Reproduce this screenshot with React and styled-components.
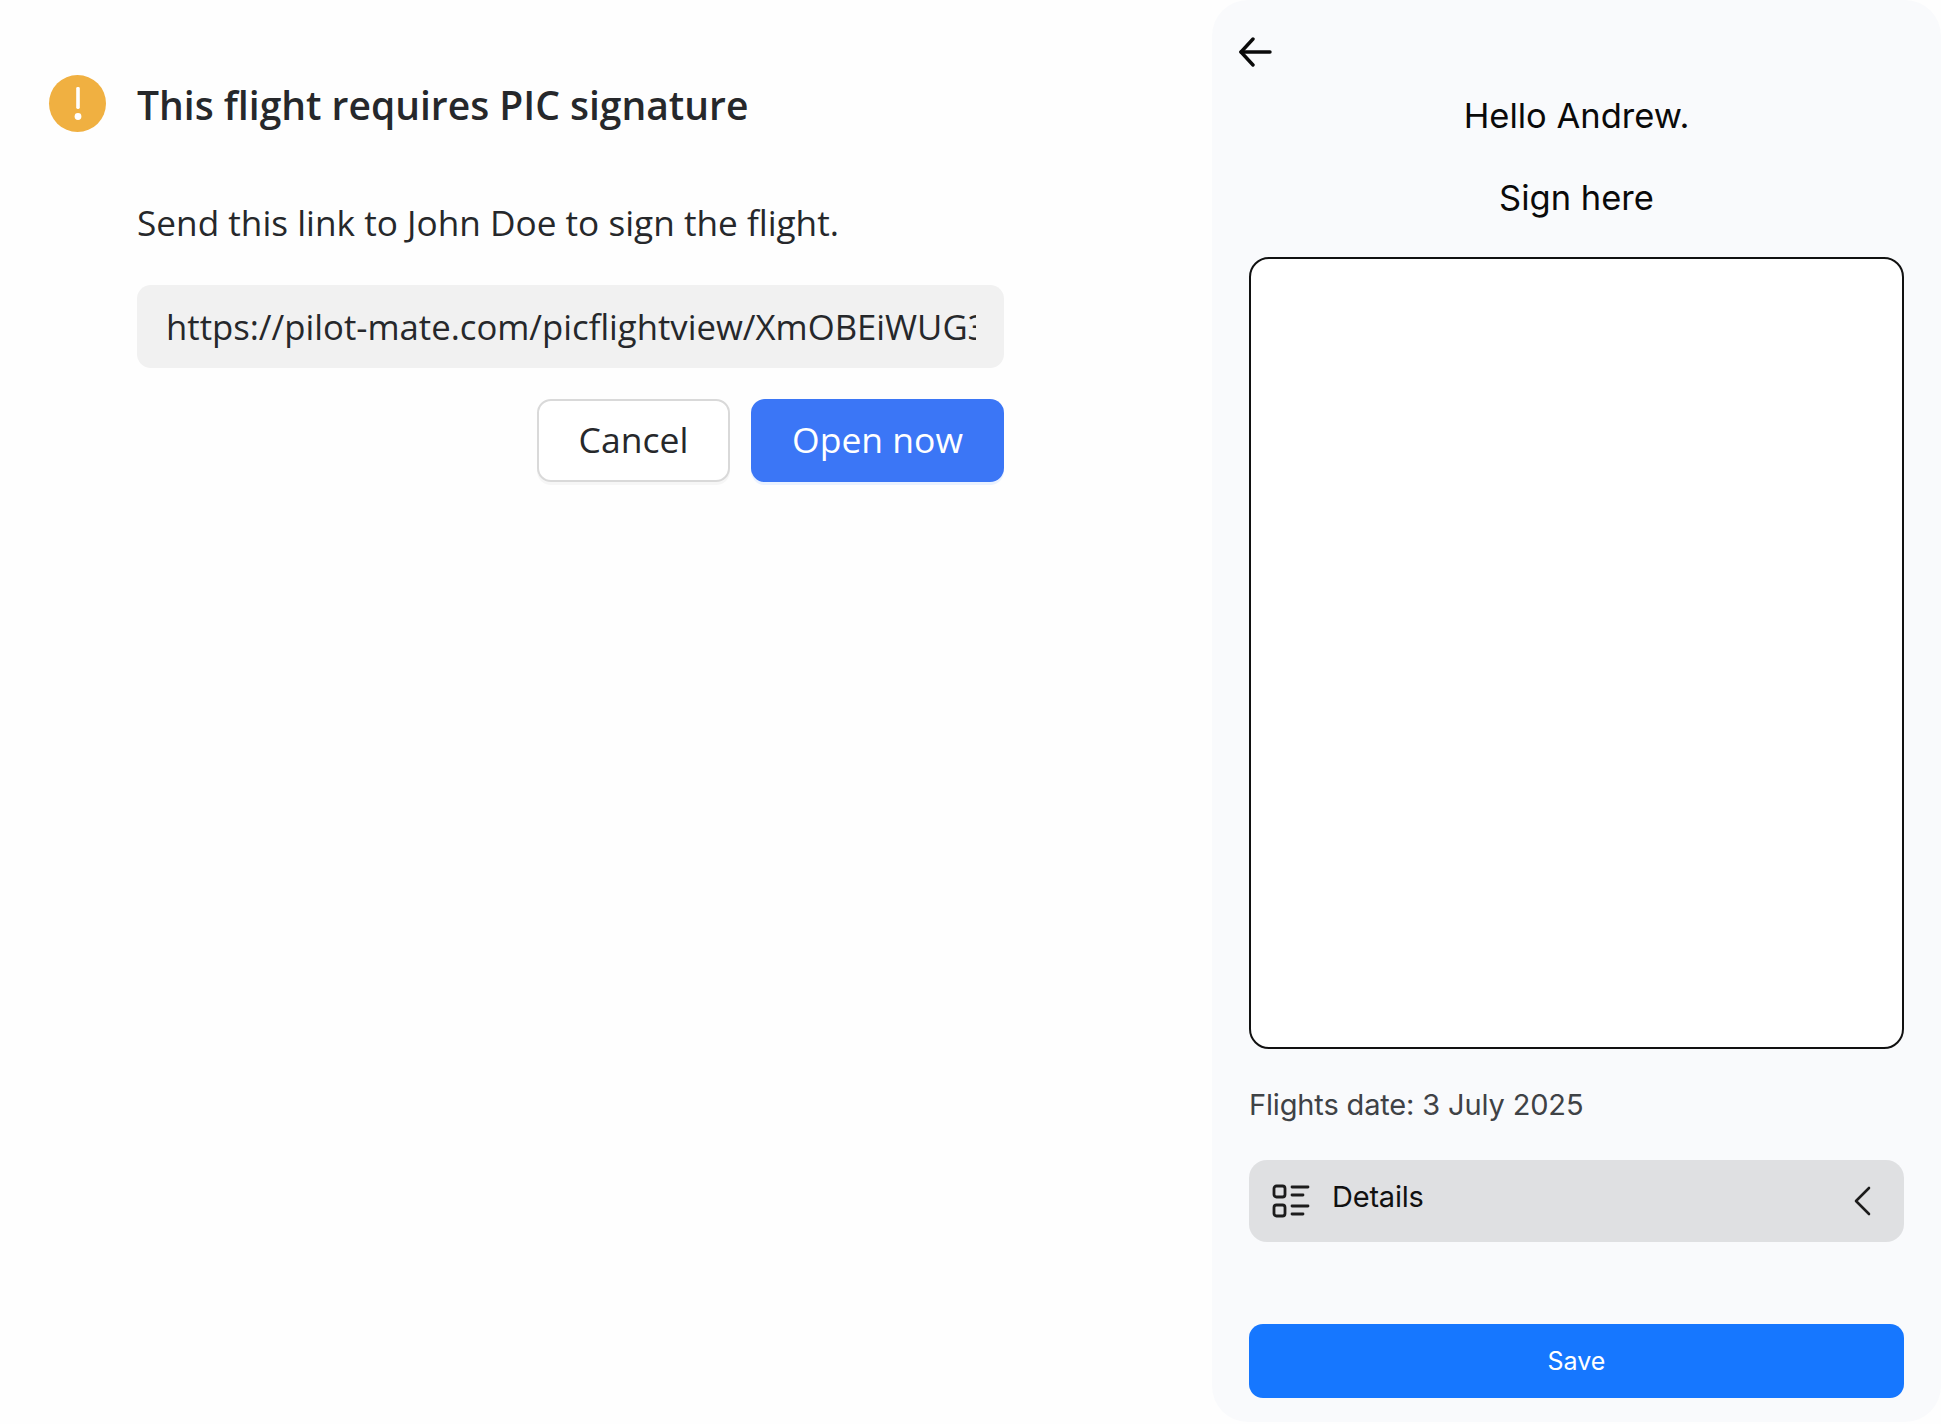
import React from 'react';
import styled, { createGlobalStyle } from 'styled-components';

const Global = createGlobalStyle`
  html, body { margin: 0; padding: 0; background: #fefefe; }
  #root { width: 1941px; height: 1424px; }
  * { box-sizing: border-box; }
`;

const Page = styled.div`
  width: 1941px;
  height: 1424px;
  display: flex;
  align-items: flex-start;
  justify-content: space-between;
  background: #fefefe;
`;

const Dialog = styled.section`
  width: 1004px;
  padding: 75px 0 0 49px;
  display: flex;
  flex-direction: column;
  font-family: "Open Sans", sans-serif;
  color: #26282b;
`;

const Head = styled.div`
  display: flex;
  align-items: center;
  gap: 31px;
  height: 57px;
`;

const Badge = styled.span`
  width: 57px;
  height: 57px;
  flex: none;
  border-radius: 50%;
  background: #f0b041;
  display: flex;
  align-items: center;
  justify-content: center;
`;

const Title = styled.h1`
  margin: 2px 0 0;
  font-size: 39px;
  font-weight: 600;
  line-height: 57px;
  white-space: nowrap;
`;

const Body = styled.div`
  margin-left: 88px;
  display: flex;
  flex-direction: column;
`;

const Desc = styled.p`
  margin: 67px 0 0;
  font-size: 35.2px;
  line-height: 46px;
  white-space: nowrap;
`;

const LinkField = styled.div`
  margin-top: 40px;
  height: 83px;
  border-radius: 14px;
  background: #f1f1f1;
  padding: 0 28px 0 29px;
  display: flex;
  align-items: center;
`;

const LinkText = styled.div`
  width: 100%;
  overflow: hidden;
  white-space: nowrap;
  font-size: 34.7px;
  line-height: 46px;
`;

const Actions = styled.div`
  margin-top: 31px;
  display: flex;
  justify-content: flex-end;
  gap: 21px;
`;

const Button = styled.button`
  height: 83px;
  width: ${p => p.$w}px;
  border-radius: 14px;
  font-family: inherit;
  font-size: 35.5px;
  padding: 0 0 4px;
  border: ${p => (p.$primary ? 'none' : '2px solid #d9d9d9')};
  background: ${p => (p.$primary ? '#3b76f6' : '#ffffff')};
  color: ${p => (p.$primary ? '#ffffff' : '#26282b')};
  box-shadow: ${p => (p.$primary ? '0 3px 0 #eaf2ff' : '0 3px 0 #f6f6f6')};
`;

const Panel = styled.aside`
  width: 729px;
  height: 1422px;
  background: #f9fafc;
  border-radius: 36px;
  padding: 38px 37px 24px;
  display: flex;
  flex-direction: column;
  font-family: Inter, sans-serif;
  color: #0a0a0a;
`;

const Back = styled.div`
  height: 28px;
  margin-left: -11px;
  display: flex;
  align-items: center;
`;

const Greeting = styled.div`
  margin-top: 26px;
  text-align: center;
  font-size: 34.5px;
  line-height: 48px;
`;

const SignLabel = styled(Greeting)`
  margin-top: 34px;
`;

const Canvas = styled.div`
  margin-top: 35px;
  height: 792px;
  background: #ffffff;
  border: 2px solid #111;
  border-radius: 20px;
`;

const DateLine = styled.div`
  margin-top: 39px;
  font-size: 29px;
  line-height: 34px;
  color: #3f4246;
  letter-spacing: -0.15px;
`;

const Details = styled.div`
  margin-top: 38px;
  height: 82px;
  border-radius: 18px;
  background: #dfe0e2;
  padding: 0 33px 0 23px;
  display: flex;
  align-items: center;
`;

const DetailsLabel = styled.span`
  margin-left: 22px;
  margin-top: -10px;
  font-size: 29px;
  letter-spacing: -0.2px;
  color: #111;
  flex: 1;
`;

const Save = styled.button`
  margin-top: auto;
  height: 74px;
  border: none;
  border-radius: 14px;
  background: #1677ff;
  color: #fff;
  font-family: inherit;
  font-size: 25px;
`;

export default function App() {
  return (
    <Page>
      <Global />
      <Dialog>
        <Head>
          <Badge>
            <svg width="8" height="34" viewBox="0 0 8 34" fill="#fff">
              <rect x="2.2" y="0" width="3.6" height="22" rx="1.4" />
              <circle cx="4" cy="29.5" r="3.4" />
            </svg>
          </Badge>
          <Title>This flight requires PIC signature</Title>
        </Head>
        <Body>
          <Desc>Send this link to John Doe to sign the flight.</Desc>
          <LinkField>
            <LinkText>https://pilot-mate.com/picflightview/XmOBEiWUG3kd92</LinkText>
          </LinkField>
          <Actions>
            <Button $w={193}>Cancel</Button>
            <Button $w={253} $primary>Open now</Button>
          </Actions>
        </Body>
      </Dialog>
      <Panel>
        <Back>
          <svg width="34" height="30" viewBox="0 0 34 30" fill="none" stroke="#0a0a0a" strokeWidth="3.4" strokeLinecap="round" strokeLinejoin="round">
            <path d="M32 15H3" />
            <path d="M15 2 3 15l12 13" />
          </svg>
        </Back>
        <Greeting>Hello Andrew.</Greeting>
        <SignLabel>Sign here</SignLabel>
        <Canvas />
        <DateLine>Flights date: 3 July 2025</DateLine>
        <Details>
          <svg width="38" height="34" viewBox="0 0 38 34" fill="none" stroke="#1c1c1c" strokeWidth="2.8" strokeLinecap="round" strokeLinejoin="round">
            <rect x="2" y="2" width="11" height="11" rx="2.5" />
            <rect x="2" y="21" width="11" height="11" rx="2.5" />
            <path d="M20 3h16M20 11h11M20 22h16M20 30h11" />
          </svg>
          <DetailsLabel>Details</DetailsLabel>
          <svg width="17" height="30" viewBox="0 0 17 30" fill="none" stroke="#1c1c1c" strokeWidth="2.6" strokeLinecap="round" strokeLinejoin="round">
            <path d="M15 2 2 15l13 13" />
          </svg>
        </Details>
        <Save>Save</Save>
      </Panel>
    </Page>
  );
}
